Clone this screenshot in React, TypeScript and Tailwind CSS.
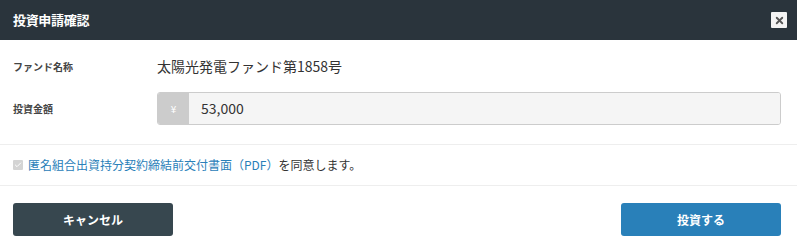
import { Check, X } from 'lucide-react';

export default function App() {
  return (
    <div className="w-[797px] h-[246px] bg-white text-[#333] overflow-hidden" style={{ fontFamily: '"Noto Sans CJK JP", "Liberation Sans", sans-serif' }}>
      {/* Header */}
      <div className="h-[40px] bg-[#2a343c] flex items-center justify-between pl-[13px] pr-[10px]">
        <h1 className="text-[13px] font-bold text-white tracking-tight">投資申請確認</h1>
        <button className="w-[16px] h-[16px] bg-[#f4f4f4] flex items-center justify-center rounded-[1px]">
          <X size={11} strokeWidth={4} className="text-[#555]" />
        </button>
      </div>

      {/* Body */}
      <div className="pt-[10px] pb-[19px] px-[13px] border-b border-[#eeeeee]">
        <div className="flex items-center h-[33px]">
          <span className="w-[144px] text-[10px] font-bold text-[#444]">ファンド名称</span>
          <span className="text-[14px] text-[#333]">太陽光発電ファンド第1858号</span>
        </div>
        <div className="flex items-center mt-[9px]">
          <span className="w-[144px] text-[10px] font-bold text-[#444]">投資金額</span>
          <div className="flex-1 flex h-[33px] mr-[3px] rounded-[3px] border border-[#cccccc] overflow-hidden">
            <div className="w-[31px] bg-[#cccccc] flex items-center justify-center text-[10px] text-white">¥</div>
            <div className="flex-1 bg-[#f5f5f5] flex items-center pl-[12px] text-[14px] text-[#333]">53,000</div>
          </div>
        </div>
      </div>

      {/* Agreement */}
      <div className="h-[41px] px-[13px] flex items-center gap-[5px] border-b border-[#eeeeee]">
        <span className="w-[10px] h-[10px] bg-[#d4d4d4] rounded-[1px] flex items-center justify-center">
          <Check size={8} strokeWidth={3} className="text-white" />
        </span>
        <span className="text-[12px]">
          <a className="text-[#2980b9]">匿名組合出資持分契約締結前交付書面（PDF）</a>
          <span className="text-[#333]">を同意します。</span>
        </span>
      </div>

      {/* Buttons */}
      <div className="flex justify-between pt-[17px] px-[13px] pr-[16px]">
        <button className="w-[160px] h-[33px] rounded-[3px] bg-[#37474f] text-white text-[12px] font-bold">キャンセル</button>
        <button className="w-[160px] h-[33px] rounded-[3px] bg-[#2980b9] text-white text-[12px] font-bold">投資する</button>
      </div>
    </div>
  );
}
